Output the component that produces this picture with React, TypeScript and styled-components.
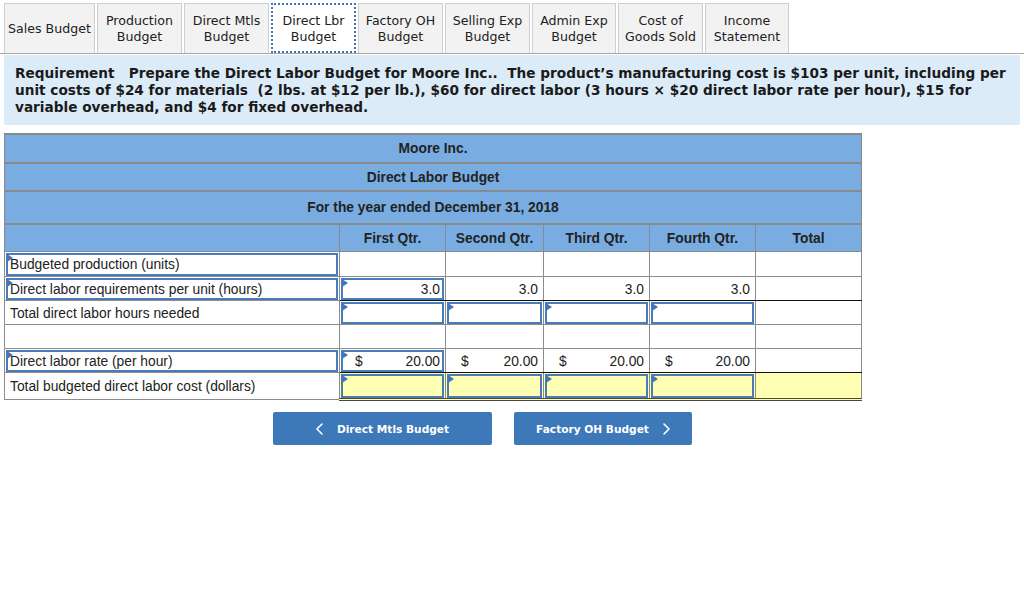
import React from "react";
import styled, { createGlobalStyle } from "styled-components";

const Global = createGlobalStyle`
  html, body { margin: 0; padding: 0; background: #fff; }
  body { font-family: "Liberation Sans", Arial, sans-serif; color: #222; }
`;

const Page = styled.div`
  width: 1024px;
  height: 608px;
  padding-top: 3px;
  box-sizing: border-box;
  overflow: hidden;
`;

const TabBar = styled.div`
  display: flex;
  gap: 2px;
  padding-left: 4px;
  height: 50px;
  border-bottom: 1px solid #a8a8a8;
`;

const Tab = styled.div<{ $w: number; $active?: boolean }>`
  width: ${(p) => p.$w}px;
  box-sizing: border-box;
  height: 50px;
  display: flex;
  align-items: center;
  justify-content: center;
  text-align: center;
  font-family: "DejaVu Sans", Verdana, sans-serif;
  font-size: 12.6px;
  line-height: 16px;
  color: #222;
  background: ${(p) => (p.$active ? "#fff" : "#f2f2f2")};
  border: ${(p) => (p.$active ? "2px dotted #3f74bb" : "1px solid #cfcfcf")};
  border-bottom: ${(p) => (p.$active ? "2px dotted #3f74bb" : "none")};
  padding-top: ${(p) => (p.$active ? "1px" : "0")};
`;

const Requirement = styled.div`
  margin: 1px 4px 0 4px;
  height: 70px;
  box-sizing: border-box;
  padding: 10px 11px 0 11px;
  background: #dbebf8;
  font-family: "DejaVu Sans", Verdana, sans-serif;
  font-weight: bold;
  font-size: 13.65px;
  line-height: 17px;
  color: #1a1a1a;
  white-space: nowrap;
`;

const Table = styled.table`
  margin: 8px 0 0 4px;
  width: 857px;
  border-collapse: collapse;
  table-layout: fixed;
  font-size: 13.8px;
`;

const HeadCell = styled.th<{ $h: number }>`
  height: ${(p) => p.$h}px;
  padding: 0;
  background: #79ade2;
  border: 1px solid #8a8a8a;
  border-width: 2px 1px 1px 1px;
  font-weight: bold;
  text-align: center;
  color: #222;
`;

const Td = styled.td<{ $h: number; $yellow?: boolean; $bb?: "black" | "double" }>`
  height: ${(p) => p.$h}px;
  padding: 0;
  border: 1px solid #8c8c8c;
  background: ${(p) => (p.$yellow ? "#ffffb3" : "#fff")};
  ${(p) => (p.$bb === "black" ? "border-bottom: 1px solid #111;" : "")}
  ${(p) => (p.$bb === "double" ? "border-bottom: 3px double #4a4a3a;" : "")}
  vertical-align: middle;
`;

const Box = styled.div<{ $input?: boolean; $h: number; $align?: "left" | "right" | "split" }>`
  position: relative;
  box-sizing: border-box;
  height: ${(p) => p.$h}px;
  margin: 0 1px;
  display: flex;
  align-items: center;
  justify-content: ${(p) =>
    p.$align === "right" ? "flex-end" : p.$align === "split" ? "space-between" : "flex-start"};
  padding: ${(p) => (p.$align === "left" ? "1px 4px 0 2px" : p.$align === "split" ? "1px 2px 0 12px" : "1px 2px 0 4px")};
  border: 2px solid ${(p) => (p.$input ? "#4a7cbc" : "transparent")};
  white-space: nowrap;
  color: #222;
  ${(p) =>
    p.$input
      ? `&::before {
    content: "";
    position: absolute;
    top: -1px;
    left: -1px;
    width: 0;
    height: 0;
    border-top: 4px solid transparent;
    border-bottom: 4px solid transparent;
    border-left: 6px solid #3f76bd;
  }`
      : ""}
`;

const ButtonRow = styled.div`
  display: flex;
  gap: 22px;
  padding-left: 273px;
  margin-top: 11px;
`;

const NavButton = styled.div<{ $w: number }>`
  width: ${(p) => p.$w}px;
  height: 33px;
  box-sizing: border-box;
  padding-top: 1px;
  background: #3d78b9;
  border-radius: 2px;
  display: flex;
  align-items: center;
  justify-content: center;
  gap: 14px;
  color: #fff;
  font-family: "DejaVu Sans", Verdana, sans-serif;
  font-weight: bold;
  font-size: 10.6px;
`;

const Chevron = ({ dir }: { dir: "left" | "right" }) => (
  <svg width="7" height="12" viewBox="0 0 7 12">
    <path
      d={dir === "left" ? "M6 1 L1 6 L6 11" : "M1 1 L6 6 L1 11"}
      fill="none"
      stroke="#fff"
      strokeWidth="1.6"
      strokeLinecap="round"
      strokeLinejoin="round"
    />
  </svg>
);

const tabs: { label: string[]; w: number; active?: boolean }[] = [
  { label: ["Sales Budget"], w: 91 },
  { label: ["Production", "Budget"], w: 85 },
  { label: ["Direct Mtls", "Budget"], w: 85 },
  { label: ["Direct Lbr", "Budget"], w: 85, active: true },
  { label: ["Factory OH", "Budget"], w: 85 },
  { label: ["Selling Exp", "Budget"], w: 85 },
  { label: ["Admin Exp", "Budget"], w: 84 },
  { label: ["Cost of", "Goods Sold"], w: 85 },
  { label: ["Income", "Statement"], w: 84 },
];

type CellSpec =
  | { kind: "empty" }
  | { kind: "box"; text?: string; dollar?: boolean }
  | { kind: "text"; text: string; dollar?: boolean };

type RowSpec = {
  label: string;
  labelBox?: boolean;
  h: number;
  yellow?: boolean;
  bb?: "black" | "double";
  cells: CellSpec[];
};

const E: CellSpec = { kind: "empty" };

const rows: RowSpec[] = [
  { label: "Budgeted production (units)", labelBox: true, h: 24, cells: [E, E, E, E, E] },
  {
    label: "Direct labor requirements per unit (hours)",
    labelBox: true,
    h: 23,
    bb: "black",
    cells: [
      { kind: "box", text: "3.0" },
      { kind: "text", text: "3.0" },
      { kind: "text", text: "3.0" },
      { kind: "text", text: "3.0" },
      E,
    ],
  },
  {
    label: "Total direct labor hours needed",
    h: 23,
    cells: [{ kind: "box" }, { kind: "box" }, { kind: "box" }, { kind: "box" }, E],
  },
  { label: "", h: 23, cells: [E, E, E, E, E] },
  {
    label: "Direct labor rate (per hour)",
    labelBox: true,
    h: 23,
    bb: "black",
    cells: [
      { kind: "box", text: "20.00", dollar: true },
      { kind: "text", text: "20.00", dollar: true },
      { kind: "text", text: "20.00", dollar: true },
      { kind: "text", text: "20.00", dollar: true },
      E,
    ],
  },
  {
    label: "Total budgeted direct labor cost (dollars)",
    h: 25,
    yellow: true,
    bb: "double",
    cells: [{ kind: "box" }, { kind: "box" }, { kind: "box" }, { kind: "box" }, E],
  },
];

const renderValue = (c: CellSpec, h: number) => {
  if (c.kind === "empty") return null;
  const input = c.kind === "box";
  const text = c.text;
  if (c.dollar) {
    return (
      <Box $input={input} $h={h - 1} $align="split">
        <span>$</span>
        <span>{text}</span>
      </Box>
    );
  }
  return (
    <Box $input={input} $h={h - 1} $align="right">
      {text}
    </Box>
  );
};

export default function App() {
  return (
    <Page>
      <Global />
      <TabBar>
        {tabs.map((t) => (
          <Tab key={t.label.join(" ")} $w={t.w} $active={t.active}>
            <div>
              {t.label.map((l, i) => (
                <div key={i}>{l}</div>
              ))}
            </div>
          </Tab>
        ))}
      </TabBar>
      <Requirement>
        Requirement&nbsp;&nbsp; Prepare the Direct Labor Budget for Moore Inc..&nbsp; The product’s manufacturing cost is $103 per unit, including per
        <br />
        unit costs of $24 for materials&nbsp; (2 lbs. at $12 per lb.), $60 for direct labor (3 hours × $20 direct labor rate per hour), $15 for
        <br />
        variable overhead, and $4 for fixed overhead.
      </Requirement>
      <Table>
        <colgroup>
          <col style={{ width: 335 }} />
          <col style={{ width: 106 }} />
          <col style={{ width: 98 }} />
          <col style={{ width: 106 }} />
          <col style={{ width: 106 }} />
          <col style={{ width: 106 }} />
        </colgroup>
        <thead>
          <tr>
            <HeadCell colSpan={6} $h={27}>Moore Inc.</HeadCell>
          </tr>
          <tr>
            <HeadCell colSpan={6} $h={26}>Direct Labor Budget</HeadCell>
          </tr>
          <tr>
            <HeadCell colSpan={6} $h={31}>For the year ended December 31, 2018</HeadCell>
          </tr>
          <tr>
            <HeadCell $h={26} />
            <HeadCell $h={26}>First Qtr.</HeadCell>
            <HeadCell $h={26}>Second Qtr.</HeadCell>
            <HeadCell $h={26}>Third Qtr.</HeadCell>
            <HeadCell $h={26}>Fourth Qtr.</HeadCell>
            <HeadCell $h={26}>Total</HeadCell>
          </tr>
        </thead>
        <tbody>
          {rows.map((r, ri) => (
            <tr key={ri}>
              <Td $h={r.h}>
                <Box $input={r.labelBox} $h={r.h - 1} $align="left">
                  {r.label}
                </Box>
              </Td>
              {r.cells.map((c, ci) => (
                <Td key={ci} $h={r.h} $yellow={r.yellow} $bb={r.bb}>
                  {renderValue(c, r.h)}
                </Td>
              ))}
            </tr>
          ))}
        </tbody>
      </Table>
      <ButtonRow>
        <NavButton $w={219}>
          <Chevron dir="left" />
          <span>Direct Mtls Budget</span>
        </NavButton>
        <NavButton $w={178}>
          <span>Factory OH Budget</span>
          <Chevron dir="right" />
        </NavButton>
      </ButtonRow>
    </Page>
  );
}
